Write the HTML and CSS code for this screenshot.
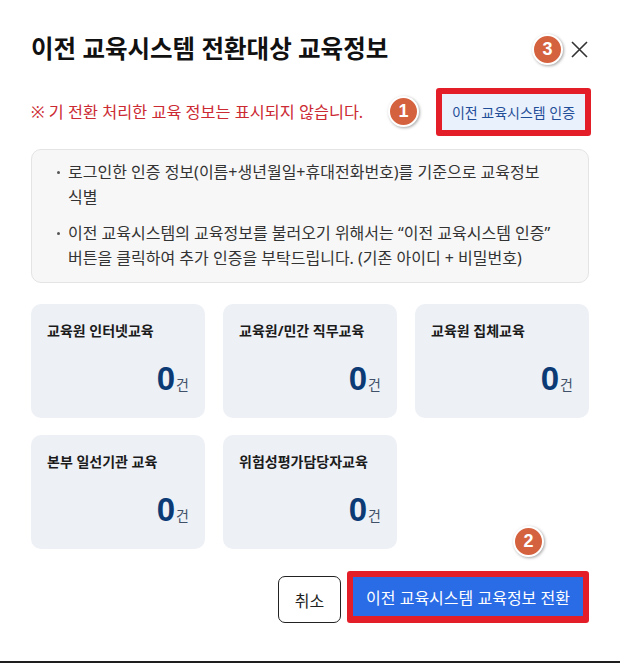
FILE: index.html
```html
<!DOCTYPE html>
<html lang="ko">
<head>
<meta charset="utf-8">
<title>이전 교육시스템 전환대상 교육정보</title>
<link rel="stylesheet" href="styles.css">
</head>
<body>
<div class="dialog">
  <div class="header">
    <h1 class="title">이전 교육시스템 전환대상 교육정보</h1>
    <button class="close" aria-label="닫기">
      <svg width="17" height="17" viewBox="0 0 17 17"><path d="M1 1 L16 16 M16 1 L1 16" stroke="#333" stroke-width="1.6" fill="none"/></svg>
    </button>
  </div>

  <div class="notice-row">
    <p class="notice">※ 기 전환 처리한 교육 정보는 표시되지 않습니다.</p>
    <div class="mark mark-auth"><button class="auth-btn">이전 교육시스템 인증</button></div>
  </div>

  <div class="info">
    <ul>
      <li>로그인한 인증 정보(이름+생년월일+휴대전화번호)를 기준으로 교육정보 식별</li>
      <li>이전 교육시스템의 교육정보를 불러오기 위해서는 “이전 교육시스템 인증” 버튼을 클릭하여 추가 인증을 부탁드립니다. (기존 아이디 + 비밀번호)</li>
    </ul>
  </div>

  <div class="cards">
    <div class="card"><div class="card-label">교육원 인터넷교육</div><div class="card-value"><span class="num">0</span><span class="unit">건</span></div></div>
    <div class="card"><div class="card-label">교육원/민간 직무교육</div><div class="card-value"><span class="num">0</span><span class="unit">건</span></div></div>
    <div class="card"><div class="card-label">교육원 집체교육</div><div class="card-value"><span class="num">0</span><span class="unit">건</span></div></div>
    <div class="card"><div class="card-label">본부 일선기관 교육</div><div class="card-value"><span class="num">0</span><span class="unit">건</span></div></div>
    <div class="card"><div class="card-label">위험성평가담당자교육</div><div class="card-value"><span class="num">0</span><span class="unit">건</span></div></div>
  </div>

  <div class="footer">
    <button class="cancel-btn">취소</button>
    <div class="mark mark-main"><button class="main-btn">이전 교육시스템 교육정보 전환</button></div>
  </div>

  <span class="badge badge-1">1</span>
  <span class="badge badge-2">2</span>
  <span class="badge badge-3">3</span>
</div>
</body>
</html>
```

FILE: styles.css
```css
* { box-sizing: border-box; }
html, body { margin: 0; padding: 0; background: #fff; }
body {
  font-family: "Noto Sans", "Noto Sans CJK KR", sans-serif;
  color: #222;
  word-break: keep-all;
}
.dialog {
  position: relative;
  width: 620px;
  height: 663px;
  padding: 30px 31px 0 31px;
  border-bottom: 2px solid #1e1e1e;
}
.header {
  display: flex;
  justify-content: space-between;
  align-items: center;
  height: 38px;
}
.title {
  margin: 0;
  font-size: 24.5px;
  font-weight: 700;
  line-height: 38px;
  color: #111;
  letter-spacing: 0;
}
.close {
  border: 0;
  background: none;
  padding: 0;
  width: 17px;
  height: 17px;
  margin-right: 1px;
  display: flex;
}
.notice-row {
  margin-top: 20px;
  display: flex;
  justify-content: space-between;
  align-items: center;
  height: 48px;
}
.notice {
  margin: 0;
  font-size: 16.3px;
  color: #cc2a33;
  line-height: 20px;
}
.mark {
  border: 6px solid #e41e29;
  border-radius: 3px;
  display: flex;
}
.mark-auth { margin-right: -2px; }
.auth-btn {
  border: 0;
  background: #e9f1fc;
  color: #1f4d98;
  font-family: inherit;
  font-size: 14px;
  width: 143px;
  height: 36px;
  padding: 0;
}
.info {
  margin-top: 13px;
  height: 134px;
  background: #f7f7f7;
  border: 1px solid #e4e4e4;
  border-radius: 10px;
  padding: 10px 20px 12px 36px;
}
.info ul {
  margin: 0;
  padding: 0;
  list-style: none;
}
.info li {
  position: relative;
  font-size: 16px;
  line-height: 25px;
  color: #333;
}
.info li + li { margin-top: 11px; }
.info li::before {
  content: "";
  position: absolute;
  left: -11px;
  top: 11px;
  width: 3px;
  height: 3px;
  border-radius: 50%;
  background: #555;
}
.cards {
  margin-top: 21px;
  display: grid;
  grid-template-columns: repeat(3, 174px);
  grid-auto-rows: 114px;
  column-gap: 18px;
  row-gap: 17px;
}
.card {
  background: #edf0f5;
  border-radius: 10px;
  padding: 17px 16px 0 16px;
  display: flex;
  flex-direction: column;
}
.card-label {
  font-size: 14px;
  font-weight: 700;
  line-height: 20px;
  color: #1b1b1b;
}
.card-value {
  margin-top: 21px;
  display: flex;
  justify-content: flex-end;
  align-items: baseline;
}
.num {
  font-family: "Liberation Sans", Arial, sans-serif;
  font-size: 33px;
  font-weight: 700;
  color: #0b3a75;
  line-height: 34px;
}
.unit {
  font-size: 14px;
  color: #3f5068;
  margin-left: 1px;
}
.footer {
  margin-top: 22px;
  display: flex;
  justify-content: flex-end;
  align-items: flex-end;
  gap: 6px;
}
.cancel-btn {
  width: 63px;
  height: 47px;
  border: 1px solid #222;
  border-radius: 7px;
  background: #fff;
  font-family: inherit;
  font-size: 16px;
  color: #222;
  padding: 0;
}
.mark-main { border-bottom-width: 7px; }
.main-btn {
  width: 230px;
  height: 39px;
  border: 0;
  background: #2a6be6;
  color: #fff;
  font-family: inherit;
  font-size: 16px;
  padding: 0;
}
.badge {
  position: absolute;
  width: 31px;
  height: 31px;
  border-radius: 50%;
  background: #d5623f;
  border: 2px solid #fff;
  box-shadow: 1px 1px 3px rgba(0,0,0,0.35);
  color: #fff;
  font-family: "Liberation Sans", Arial, sans-serif;
  font-weight: 700;
  font-size: 18px;
  display: flex;
  align-items: center;
  justify-content: center;
}
.badge-1 { left: 388px; top: 96px; }
.badge-2 { left: 513px; top: 526px; }
.badge-3 { left: 532px; top: 34px; }
```
